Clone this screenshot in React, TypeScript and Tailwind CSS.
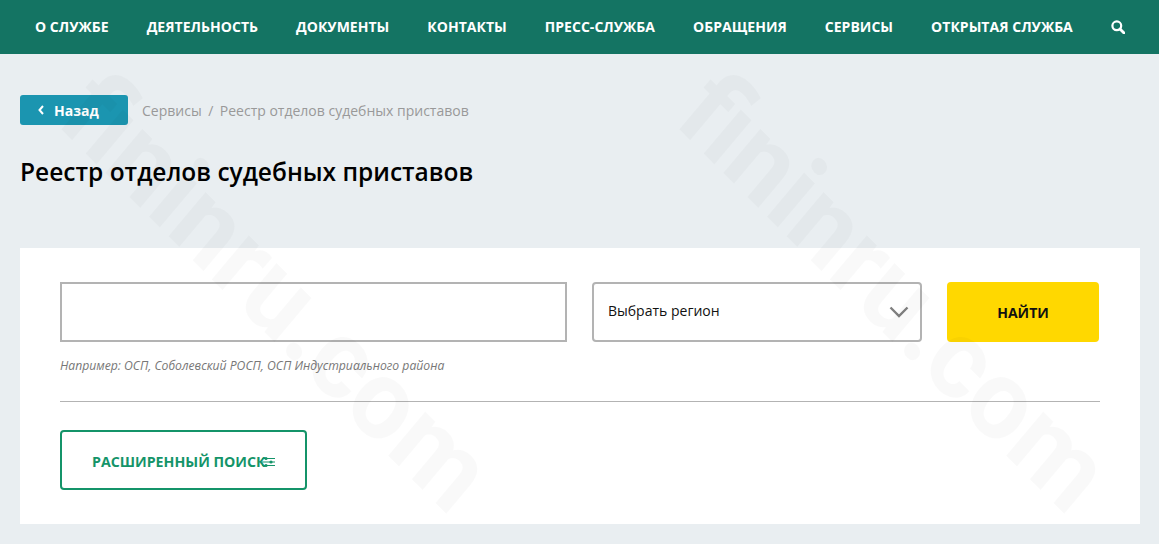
import React from "react";

const nav = ["О службе", "Деятельность", "Документы", "Контакты", "Пресс-служба", "Обращения", "Сервисы", "Открытая служба"];

function Watermark({ className }: { className: string }) {
  return (
    <div className={`pointer-events-none absolute top-[237px] w-[760px] h-[110px] flex items-center justify-center [transform:scaleY(1.09)_rotate(42.5deg)] font-['Roboto',sans-serif] text-[104px] leading-none font-bold text-black/[0.022] whitespace-nowrap ${className}`}>
      fininru.com
    </div>
  );
}

export default function App() {
  return (
    <div className="relative h-[544px] w-[1159px] overflow-hidden bg-[#e9eef1] font-['Open_Sans',sans-serif]">
      <header className="h-[54px] bg-[#147463] flex items-center pl-[35px] text-white">
        <nav className="flex items-center gap-[38px] -mt-[2px]">
          {nav.map((n) => (
            <a key={n} className="text-[14px] tracking-[0.03px] font-bold uppercase whitespace-nowrap">{n}</a>
          ))}
        </nav>
        <svg className="ml-[38px] -mt-[1px]" width="14" height="14" viewBox="0 0 14 14" fill="none" stroke="white">
          <circle cx="5.8" cy="5.8" r="4.4" strokeWidth="2.2" />
          <path d="M9 9L13 13" strokeWidth="2.8" strokeLinecap="round" />
        </svg>
      </header>

      <main className="px-5">
        <div className="mt-[41px] flex items-center h-[30px]">
          <button className="w-[108px] h-[30px] rounded-[3px] bg-[#1b95b0] text-white text-[14px] font-bold flex items-center pl-[18px] gap-[10px]">
            <svg width="6" height="10" viewBox="0 0 6 10" fill="none" stroke="white" strokeWidth="2">
              <path d="M5 1L1.5 5L5 9" />
            </svg>
            Назад
          </button>
          <div className="ml-[14px] text-[14px] text-[#999999] flex gap-[6.5px]">
            <span>Сервисы</span>
            <span>/</span>
            <span>Реестр отделов судебных приставов</span>
          </div>
        </div>

        <h1 className="mt-[27px] text-[24.5px] leading-[40px] font-semibold text-black">Реестр отделов судебных приставов</h1>

        <section className="mt-[56px] w-[1120px] h-[276px] bg-white px-10 pt-[34px]">
          <div className="flex">
            <div className="w-[507px] h-[60px] border-2 border-[#b3b3b3] bg-white" />
            <div className="ml-[25px] w-[330px] h-[60px] border-2 border-[#b3b3b3] rounded-[4px] flex items-center justify-between pl-[14px] pr-[11px] bg-white">
              <span className="text-[14px] text-[#111111] -mt-[4px]">Выбрать регион</span>
              <svg width="20" height="12" viewBox="0 0 20 12" fill="none" stroke="#808080" strokeWidth="2.4">
                <path d="M1.5 1.5L10 10L18.5 1.5" />
              </svg>
            </div>
            <button className="ml-[25px] w-[152px] h-[60px] rounded-[4px] bg-[#ffd800] text-[14px] font-bold text-[#111111]">НАЙТИ</button>
          </div>
          <p className="mt-[14px] text-[12.2px] leading-[20px] italic text-[#777777]">Например: ОСП, Соболевский РОСП, ОСП Индустриального района</p>
          <div className="mt-[25px] h-px bg-[#b3b3b3]" />
          <button className="mt-[28px] w-[247px] h-[60px] rounded-[4px] border-2 border-[#149469] flex items-center pl-[30px] pt-[4px] text-[14.2px] font-bold text-[#149469] whitespace-nowrap">
            РАСШИРЕННЫЙ ПОИСК
            <svg className="shrink-0 -ml-[4px]" width="13" height="12" viewBox="0 0 13 12" fill="none" stroke="#149469">
              <path d="M0 2.5H13M0 6H13M0 9.5H13" strokeWidth="1.2" />
              <circle cx="4" cy="2.5" r="1.6" fill="#149469" stroke="none" />
              <circle cx="9" cy="6" r="1.6" fill="#149469" stroke="none" />
              <circle cx="4" cy="9.5" r="1.6" fill="#149469" stroke="none" />
            </svg>
          </button>
        </section>
      </main>

      <Watermark className="left-[-104px]" />
      <Watermark className="left-[514px]" />
    </div>
  );
}
